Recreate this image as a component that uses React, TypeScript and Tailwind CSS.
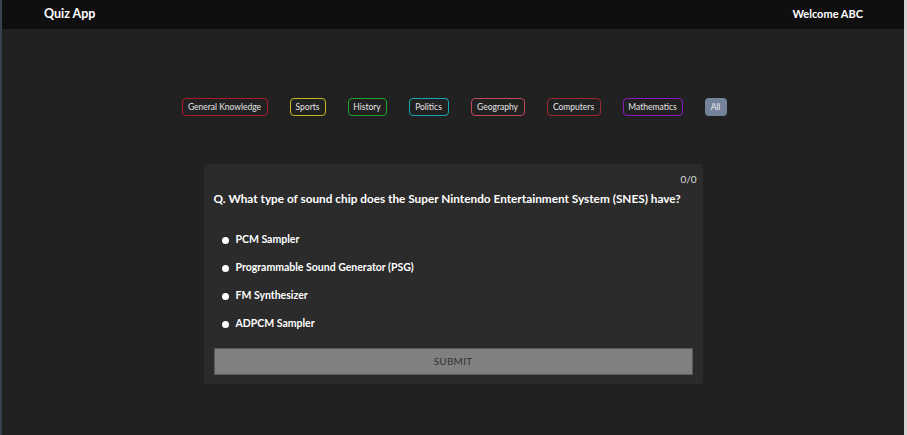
import React, { useState } from 'react';

const categories = [
  { name: 'General Knowledge', cls: 'w-[86px] border-[#b0182a]' },
  { name: 'Sports', cls: 'w-[36px] border-[#c9b51c]' },
  { name: 'History', cls: 'w-[39px] border-[#1fa52b]' },
  { name: 'Politics', cls: 'w-[40px] border-[#15a7b0]' },
  { name: 'Geography', cls: 'w-[54px] border-[#c2485e]' },
  { name: 'Computers', cls: 'w-[54px] border-[#9e2a30]' },
  { name: 'Mathematics', cls: 'w-[60px] border-[#8a1bb8]' },
];

const options = ['PCM Sampler', 'Programmable Sound Generator (PSG)', 'FM Synthesizer', 'ADPCM Sampler'];

const App = () => {
  const [selected, setSelected] = useState<number | null>(null);

  return (
    <div
      className="h-[435px] w-[907px] flex flex-col bg-[#212121] border-l-2 border-l-[#3a4250] border-r-[3px] border-r-[#d4d4d4] overflow-hidden"
      style={{ fontFamily: 'Lato, "Open Sans", sans-serif' }}
    >
      {/* Header */}
      <div className="h-[29px] shrink-0 bg-[#0f0f0f] flex items-center justify-between pl-[42px] pr-[41px] text-white">
        <span className="text-[12.5px] font-bold">Quiz App</span>
        <span className="text-[11px] font-bold">Welcome ABC</span>
      </div>

      {/* Categories */}
      <div className="flex justify-center gap-[22px] pt-[69px] pl-[2px]">
        {categories.map((c) => (
          <button
            key={c.name}
            className={`h-[18px] rounded-[4px] border ${c.cls} text-[8.5px] text-[#e5e5e5] leading-none whitespace-nowrap`}
          >
            {c.name}
          </button>
        ))}
        <button className="h-[18px] w-[22px] rounded-[4px] bg-[#74839a] text-[8.5px] text-[#eef0f4] leading-none">All</button>
      </div>

      {/* Question card */}
      <div className="flex justify-center pt-[48px]">
        <div className="w-[499px] bg-[#2b2b2b] rounded-[4px] px-[10px] pt-[9px] pb-[9px]">
          <div className="text-right text-[10px] text-[#dcdcdc] -mr-[4px] leading-[12px]">0/0</div>
          <div className="text-[11.8px] font-bold text-white mt-[6px] leading-[15px]">
            Q. What type of sound chip does the Super Nintendo Entertainment System (SNES) have?
          </div>
          <div className="flex flex-col gap-[12px] mt-[26px] pl-[8px]">
            {options.map((o, i) => (
              <label key={o} className="flex items-center gap-[7px] h-[16px] cursor-pointer" onClick={() => setSelected(i)}>
                <span className="w-[7px] h-[7px] rounded-full bg-white flex items-center justify-center">
                  {selected === i && <span className="w-[3px] h-[3px] rounded-full bg-[#333]" />}
                </span>
                <span className="text-[10.5px] font-bold text-white">{o}</span>
              </label>
            ))}
          </div>
          <button className="mt-[16px] w-full h-[27px] bg-[#808080] border border-[#5a5a5a] text-[10px] text-[#333] tracking-wide">
            SUBMIT
          </button>
        </div>
      </div>
    </div>
  );
};

export default App;
